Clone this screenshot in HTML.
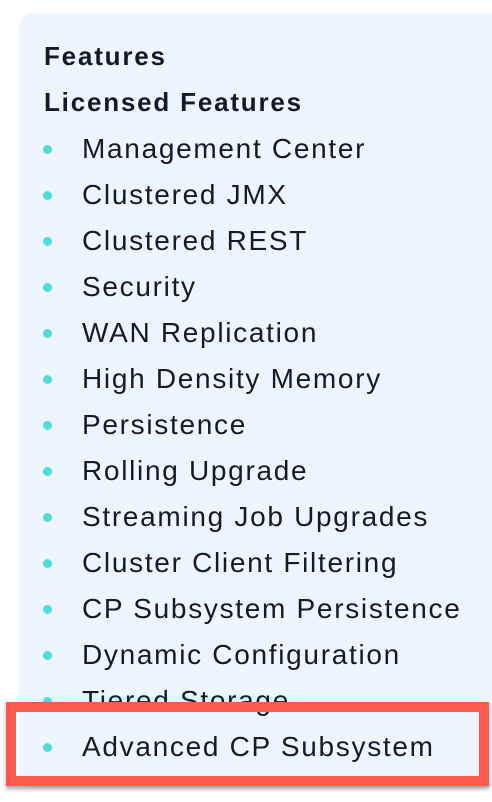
<!DOCTYPE html>
<html><head><style>
body{margin:0;width:492px;height:802px;background:#fff;position:relative;overflow:hidden;font-family:"Liberation Sans",sans-serif;color:#0f1c2b}
.panel{position:absolute;left:19px;top:13px;width:500px;height:775px;background:#eef5fe;border-radius:14px}
.h{position:absolute;left:44px;font-weight:bold;font-size:26px;letter-spacing:1.8px;line-height:30px}
.li{position:absolute;left:82px;font-size:28px;letter-spacing:1.7px;line-height:30px;white-space:nowrap}
.b{position:absolute;left:43px;width:9px;height:9px;border-radius:50%;background:#4fdcdc}
.red{position:absolute;left:6px;top:702px;width:463px;height:64px;border:10px solid #fb5a4c;box-shadow:0 3px 4px rgba(0,0,0,.35)}
</style></head><body>
<div class="panel"></div>
<div class="h" style="top:41px">Features</div>
<div class="h" style="top:87px">Licensed Features</div>
<div class="b" style="top:145px"></div><div class="li" style="top:134px">Management Center</div>
<div class="b" style="top:191px"></div><div class="li" style="top:180px">Clustered JMX</div>
<div class="b" style="top:237px"></div><div class="li" style="top:226px">Clustered REST</div>
<div class="b" style="top:283px"></div><div class="li" style="top:272px">Security</div>
<div class="b" style="top:329px"></div><div class="li" style="top:318px">WAN Replication</div>
<div class="b" style="top:375px"></div><div class="li" style="top:364px">High Density Memory</div>
<div class="b" style="top:421px"></div><div class="li" style="top:410px">Persistence</div>
<div class="b" style="top:467px"></div><div class="li" style="top:456px">Rolling Upgrade</div>
<div class="b" style="top:513px"></div><div class="li" style="top:502px">Streaming Job Upgrades</div>
<div class="b" style="top:559px"></div><div class="li" style="top:548px">Cluster Client Filtering</div>
<div class="b" style="top:605px"></div><div class="li" style="top:594px">CP Subsystem Persistence</div>
<div class="b" style="top:651px"></div><div class="li" style="top:640px">Dynamic Configuration</div>
<div class="b" style="top:697px"></div><div class="li" style="top:686px">Tiered Storage</div>
<div class="red"></div>
<div class="b" style="top:743px"></div><div class="li" style="top:732px">Advanced CP Subsystem</div>
</body></html>
